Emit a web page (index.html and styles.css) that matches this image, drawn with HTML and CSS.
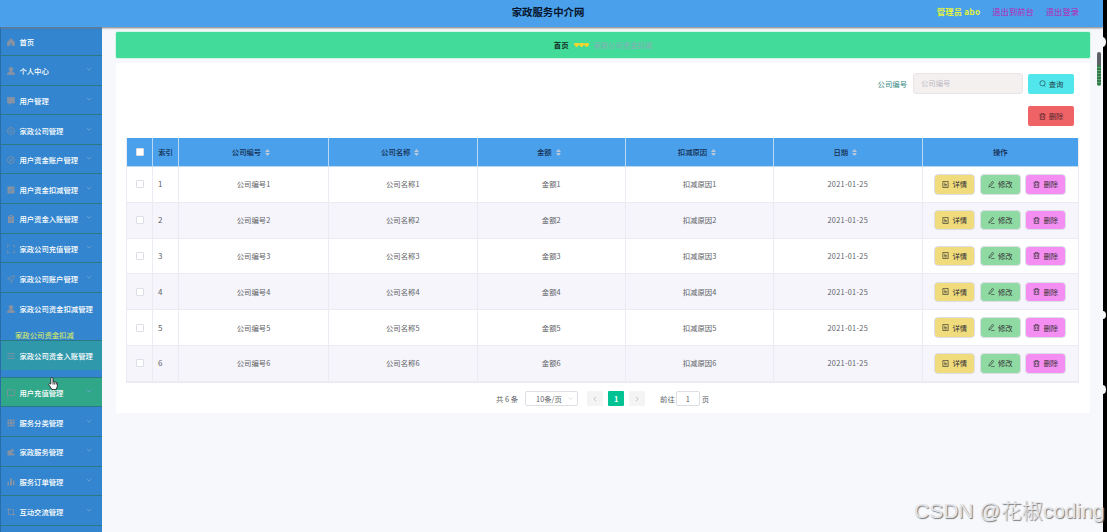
FILE: index.html
```html
<!DOCTYPE html>
<html lang="zh-CN">
<head>
<meta charset="utf-8">
<title>家政服务中介网</title>
<link rel="stylesheet" href="styles.css">
</head>
<body>
<svg class="defs" width="0" height="0">
  <symbol id="home" viewBox="0 0 16 16"><path fill="currentColor" d="M8 1 1 8v7h5v-5h4v5h5V8z"/></symbol>
  <symbol id="user" viewBox="0 0 16 16"><circle cx="8" cy="4.5" r="4" fill="currentColor"/><path fill="currentColor" d="M6 8h4v2l5 2v3H1v-3l5-2z"/></symbol>
  <symbol id="chat" viewBox="0 0 16 16"><path fill="currentColor" d="M1 1h14v11H8l-3 3v-3H1z"/></symbol>
  <symbol id="gauge" viewBox="0 0 16 16"><circle cx="8" cy="8" r="7"/><path d="M8 12V5M4 10V8M12 10V8M5 4l1 1M11 4l-1 1"/></symbol>
  <symbol id="compass" viewBox="0 0 16 16"><circle cx="8" cy="8" r="7"/><path d="m11 5-2 4-3 2 2-4z"/></symbol>
  <symbol id="check" viewBox="0 0 16 16"><path fill="currentColor" stroke="none" d="M1 1h14v14H1z"/><path class="tick" d="m4 8 3 3 5-6"/></symbol>
  <symbol id="clip" viewBox="0 0 16 16"><path fill="currentColor" stroke="none" d="M2 2h3V0h6v2h3v14H2z"/><path class="tick" d="m5 9 2 2 4-5M5 3h6"/></symbol>
  <symbol id="full" viewBox="0 0 16 16"><path d="M1 5V1h4M11 1h4v4M15 11v4h-4M5 15H1v-4"/></symbol>
  <symbol id="send" viewBox="0 0 16 16"><path d="M1 7 15 1 9 15 7 9z"/></symbol>
  <symbol id="menu" viewBox="0 0 16 16"><path d="M1 3h14M1 8h14M1 13h14"/></symbol>
  <symbol id="bubble" viewBox="0 0 16 16"><path d="M1 2h14v11H5l-4 2z"/></symbol>
  <symbol id="grid" viewBox="0 0 16 16"><path fill="currentColor" stroke="none" d="M1 1h4v4H1zM6 1h4v4H6zM11 1h4v4h-4zM1 6h4v4H1zM6 6h4v4H6zM11 6h4v4h-4zM1 11h4v4H1zM6 11h4v4H6zM11 11h4v4h-4z"/></symbol>
  <symbol id="wallet" viewBox="0 0 16 16"><path fill="currentColor" stroke="none" d="M1 5h6l4-4 3 4v2h-4v4h5v4H1z"/></symbol>
  <symbol id="bars" viewBox="0 0 16 16"><path fill="currentColor" stroke="none" d="M1 8h3v7H1zM6 1h4v14H6zM12 5h3v10h-3z"/></symbol>
  <symbol id="crop" viewBox="0 0 16 16"><path d="M3 0v13h13M0 3h13v13"/></symbol>
  <symbol id="down" viewBox="0 0 16 16"><path d="m2 5 6 6 6-6"/></symbol>
  <symbol id="search" viewBox="0 0 16 16"><circle cx="8" cy="7.5" r="6"/><path d="m12 12 2 3"/></symbol>
  <symbol id="trash" viewBox="0 0 16 16"><path d="M1 4h14M5 4V1h6v3M3 4v11h10V4M6 7v5M10 7v5"/></symbol>
  <symbol id="doc" viewBox="0 0 16 16"><path d="M2 1h12v14H2zM5 5h3M5 8h6M5 11h6"/></symbol>
  <symbol id="edit" viewBox="0 0 16 16"><path d="m3 10 7-9 3 2-7 9-4 2zM7 15h8"/></symbol>
  <symbol id="sort" viewBox="0 0 10 14"><path fill="currentColor" stroke="none" d="m5 0 5 6H0zM5 14 0 8h10z"/></symbol>
  <symbol id="heart" viewBox="0 0 12 10"><path fill="currentColor" stroke="none" d="M6 10 0 4V2l2-2h8l2 2v2z"/></symbol>
</svg>

<div class="screen">
  <header class="topbar">
    <h1 class="site-title">家政服务中介网</h1>
    <nav class="account"><b class="who">管理员 abo</b><a>退出到前台</a><a>退出登录</a></nav>
  </header>
  <div class="body">
    <aside class="sidebar">
      <div class="item first"><svg><use href="#home"/></svg><span>首页</span></div>
      <div class="item"><svg><use href="#user"/></svg><span>个人中心</span><svg class="arrow"><use href="#down"/></svg></div>
      <div class="item"><svg><use href="#chat"/></svg><span>用户管理</span><svg class="arrow"><use href="#down"/></svg></div>
      <div class="item"><svg><use href="#gauge"/></svg><span>家政公司管理</span><svg class="arrow"><use href="#down"/></svg></div>
      <div class="item"><svg><use href="#compass"/></svg><span>用户资金账户管理</span><svg class="arrow"><use href="#down"/></svg></div>
      <div class="item"><svg><use href="#check"/></svg><span>用户资金扣减管理</span><svg class="arrow"><use href="#down"/></svg></div>
      <div class="item"><svg><use href="#clip"/></svg><span>用户资金入账管理</span><svg class="arrow"><use href="#down"/></svg></div>
      <div class="item"><svg><use href="#full"/></svg><span>家政公司充值管理</span><svg class="arrow"><use href="#down"/></svg></div>
      <div class="item"><svg><use href="#send"/></svg><span>家政公司账户管理</span><svg class="arrow"><use href="#down"/></svg></div>
      <div class="group">
        <div class="item open"><svg><use href="#user"/></svg><span>家政公司资金扣减管理</span></div>
        <div class="subitem">家政公司资金扣减</div>
      </div>
      <div class="item teal"><svg><use href="#menu"/></svg><span>家政公司资金入账管理</span></div>
      <div class="spacer"></div>
      <div class="item hover"><svg><use href="#bubble"/></svg><span>用户充值管理</span><svg class="arrow"><use href="#down"/></svg></div>
      <div class="item"><svg><use href="#grid"/></svg><span>服务分类管理</span><svg class="arrow"><use href="#down"/></svg></div>
      <div class="item"><svg><use href="#wallet"/></svg><span>家政服务管理</span><svg class="arrow"><use href="#down"/></svg></div>
      <div class="item"><svg><use href="#bars"/></svg><span>服务订单管理</span><svg class="arrow"><use href="#down"/></svg></div>
      <div class="item"><svg><use href="#crop"/></svg><span>互动交流管理</span><svg class="arrow"><use href="#down"/></svg></div>
    </aside>
    <main class="main">
      <div class="crumbs"><b>首页</b><span class="hearts"><svg><use href="#heart"/></svg><svg><use href="#heart"/></svg><svg><use href="#heart"/></svg></span><span class="here">家政公司资金扣减</span></div>
      <section class="card">
        <div class="search"><label>公司编号</label><div class="input">公司编号</div><button class="btn query"><svg><use href="#search"/></svg>查询</button></div>
        <div class="actions"><button class="btn remove"><svg><use href="#trash"/></svg>删除</button></div>
        <div class="table">
          <div class="row head"><div><i class="box"></i></div><div>索引</div><div class="sortable">公司编号<svg><use href="#sort"/></svg></div><div class="sortable">公司名称<svg><use href="#sort"/></svg></div><div class="sortable">金额<svg><use href="#sort"/></svg></div><div class="sortable">扣减原因<svg><use href="#sort"/></svg></div><div class="sortable">日期<svg><use href="#sort"/></svg></div><div>操作</div></div>
          <div class="row"><div><i class="box"></i></div><div class="index">1</div><div>公司编号1</div><div>公司名称1</div><div>金额1</div><div>扣减原因1</div><div class="date">2021-01-25</div><div class="ops"><button class="op detail"><svg><use href="#doc"/></svg>详情</button><button class="op edit"><svg><use href="#edit"/></svg>修改</button><button class="op del"><svg><use href="#trash"/></svg>删除</button></div></div>
          <div class="row even"><div><i class="box"></i></div><div class="index">2</div><div>公司编号2</div><div>公司名称2</div><div>金额2</div><div>扣减原因2</div><div class="date">2021-01-25</div><div class="ops"><button class="op detail"><svg><use href="#doc"/></svg>详情</button><button class="op edit"><svg><use href="#edit"/></svg>修改</button><button class="op del"><svg><use href="#trash"/></svg>删除</button></div></div>
          <div class="row"><div><i class="box"></i></div><div class="index">3</div><div>公司编号3</div><div>公司名称3</div><div>金额3</div><div>扣减原因3</div><div class="date">2021-01-25</div><div class="ops"><button class="op detail"><svg><use href="#doc"/></svg>详情</button><button class="op edit"><svg><use href="#edit"/></svg>修改</button><button class="op del"><svg><use href="#trash"/></svg>删除</button></div></div>
          <div class="row even"><div><i class="box"></i></div><div class="index">4</div><div>公司编号4</div><div>公司名称4</div><div>金额4</div><div>扣减原因4</div><div class="date">2021-01-25</div><div class="ops"><button class="op detail"><svg><use href="#doc"/></svg>详情</button><button class="op edit"><svg><use href="#edit"/></svg>修改</button><button class="op del"><svg><use href="#trash"/></svg>删除</button></div></div>
          <div class="row"><div><i class="box"></i></div><div class="index">5</div><div>公司编号5</div><div>公司名称5</div><div>金额5</div><div>扣减原因5</div><div class="date">2021-01-25</div><div class="ops"><button class="op detail"><svg><use href="#doc"/></svg>详情</button><button class="op edit"><svg><use href="#edit"/></svg>修改</button><button class="op del"><svg><use href="#trash"/></svg>删除</button></div></div>
          <div class="row even"><div><i class="box"></i></div><div class="index">6</div><div>公司编号6</div><div>公司名称6</div><div>金额6</div><div>扣减原因6</div><div class="date">2021-01-25</div><div class="ops"><button class="op detail"><svg><use href="#doc"/></svg>详情</button><button class="op edit"><svg><use href="#edit"/></svg>修改</button><button class="op del"><svg><use href="#trash"/></svg>删除</button></div></div>
        </div>
        <div class="pager"><span>共 6 条</span><div class="size">10条/页<svg><use href="#down"/></svg></div><span class="pg prev"><svg><use href="#down"/></svg></span><span class="pg now">1</span><span class="pg next"><svg><use href="#down"/></svg></span><span class="goto">前往</span><div class="num">1</div><span>页</span></div>
      </section>
    </main>
  </div>
</div>
<i class="scroll"></i>
<div class="edge"><i class="notch n1"></i><i class="notch n2"></i><i class="notch n3"></i></div>
<svg class="cursor" viewBox="0 0 18 24"><path d="M5 13V3q0-2 2-2t2 2v6q4-1 8 2v6l-2 6H7l-6-9q0-3 4-1z" fill="#fff" stroke="#222" stroke-width="1.6"/><path d="M9 9v5M12 10v4M15 11v3" stroke="#222" fill="none"/></svg>
<div class="watermark">CSDN @花椒coding</div>
</body>
</html>
```
FILE: styles.css
```css
* { box-sizing: border-box; }
body { margin: 0; width: 1107px; height: 532px; overflow: hidden; position: relative; background: #f6f8fc; font: 7.35px/10px "Noto Sans CJK SC", sans-serif; color: #606266; }
svg { fill: none; stroke: currentColor; stroke-width: 1.5; flex: none; }
button { font: inherit; margin: 0; padding: 0; border: 0; }
.defs { position: absolute; }
.screen { width: 1103px; height: 532px; overflow: hidden; display: flex; flex-direction: column; }
.topbar { height: 27px; flex: none; background: #4aa0eb; display: grid; grid-template-columns: 1fr auto 1fr; align-items: center; padding: 0 24px 3px 17px; box-shadow: 0 1px 2px #777; z-index: 1; }
.site-title { grid-column: 2; margin: 0; font-size: 10.4px; line-height: 14px; font-weight: 700; color: #06152b; }
.account { display: flex; justify-content: flex-end; gap: 12px; padding-bottom: 2px; font-size: 8.3px; font-weight: 500; color: #a53ec0; }
.who { color: #e2f23c; letter-spacing: .2px; }
.body { flex: 1; display: flex; min-height: 0; }
.sidebar { width: 102px; flex: none; background: #3285ce; border-left: 1px solid #286ca9; color: #fff; overflow: hidden; font-weight: 500; }
.item { height: 29.62px; display: flex; align-items: center; padding: 2px 8px 0 6px; border-bottom: 1px solid #2b7a86; white-space: nowrap; }
.item.first { height: 29px; padding-top: 1px; }
.item svg { width: 8px; height: 8px; margin-right: 4.4px; color: #8792a3; }
.item .arrow { width: 6px; height: 6px; margin: -4px 2px 0 auto; color: #6fa3d2; stroke-width: 2.4; }
.tick { stroke: #3285ce; }
.group { height: 48px; border-bottom: 1px solid #2b7a86; }
.item.open { border: 0; }
.subitem { padding: 8px 0 0 14px; color: #e0f25a; font-weight: 400; }
.item.teal { background: #3098ab; border: 0; height: 29px; }
.spacer { height: 8px; border-bottom: 1px solid #2b7a86; }
.item.hover { background: #31a78a; }
.main { flex: 1; padding: 5px 13px 0 14px; }
.crumbs { height: 26px; background: #42db9a; border-radius: 1px; display: flex; justify-content: center; align-items: center; color: #122c24; outline: 1px solid #d3f5e6; }
.hearts { display: flex; margin: 0 4px 0 5px; color: #f4d52d; }
.hearts svg { width: 5.3px; height: 4.5px; }
.here { color: #8aadb8; }
.card { margin-top: 5px; height: 350px; background: #fff; padding: 10px 11px 0 10px; }
.search { display: flex; justify-content: flex-end; align-items: center; padding-right: 5px; height: 21px; color: #388a85; }
.input { width: 110px; height: 21px; margin: 0 5px 0 6px; border: 1px solid #e8e4e8; border-radius: 3px; background: #f5f0f0; color: #bcbcc5; padding: 4px 7px; }
.btn { width: 46px; height: 20px; border-radius: 2px; display: flex; align-items: center; justify-content: center; gap: 3px; color: #24464a; }
.btn svg { width: 7px; height: 7px; }
.query { background: #51e6ec; }
.remove { background: #ef6366; color: #54262c; }
.actions { display: flex; justify-content: flex-end; padding: 12px 5px 0 0; }
.table { margin-top: 12px; border: 1px solid #ebebf3; border-top: 0; width: 953px; }
.row { display: grid; grid-template-columns: 26px 26px 150px 148.5px 148.5px 148px 148.5px 1fr; height: 35.8px; background: #fff; }
.row > div { display: flex; align-items: center; justify-content: center; border-right: 1px solid #ebebf3; border-bottom: 1px solid #ebebf3; }
.row > div:last-child { border-right: 0; }
.row.even { background: #f5f5fb; }
.row.head { height: 29px; background: #4aa0eb; color: #152e50; font-weight: 500; }
.row.head > div { border-color: #b9d9f3; }
.row.head > .sortable { padding-right: 5px; }
.head svg { width: 5px; height: 7px; margin-left: 4px; color: #b9c8da; }
.box { width: 8px; height: 8px; border: 1px solid #dcdfe6; border-radius: 1px; background: #fff; }
.row > .index { justify-content: flex-start; padding-left: 5px; font-size: 8px; }
.date { letter-spacing: .3px; }
.row > .ops { gap: 4.5px; }
.op { width: 41px; height: 20.5px; border: 1px solid #dcdfe6; border-radius: 4px; display: flex; align-items: center; justify-content: center; gap: 3px; color: #333; }
.op svg { width: 7px; height: 7px; }
.detail { background: #f0dc7d; }
.edit { background: #8fdaa3; }
.del { background: #f58ef2; }
.pager { display: flex; align-items: center; padding: 5px 0 0 370px; height: 27px; }
.size { width: 53px; height: 15px; border: 1px solid #dcdfe6; border-radius: 2px; margin: 0 9px 0 7px; display: flex; align-items: center; justify-content: space-between; padding: 0 4px 0 10px; }
.size svg { width: 5px; height: 5px; color: #b5b8c0; }
.pg { width: 16px; height: 15px; background: #f4f4f5; border-radius: 1px; margin-right: 5px; display: flex; align-items: center; justify-content: center; }
.pg svg { width: 6px; height: 6px; color: #a0a3aa; }
.prev svg { transform: rotate(90deg); }
.next svg { transform: rotate(-90deg); }
.now { background: #00c292; color: #fff; font-weight: 700; }
.goto { margin-left: 10px; }
.num { width: 24px; height: 15px; border: 1px solid #dcdfe6; border-radius: 2px; margin: 0 2px 0 1px; text-align: center; line-height: 13px; }
.scroll { position: absolute; left: 1097px; top: 52px; width: 4px; height: 34px; border-radius: 2px; background: repeating-linear-gradient(#39784d 0 2px, #55a76d 2px 3px) 0 13px no-repeat, #5e6166; }
.edge { position: absolute; left: 1103px; top: 0; width: 4px; height: 532px; background: #000; overflow: hidden; }
.notch { position: absolute; left: -4px; width: 7px; height: 8px; border-radius: 50%; background: #f6f8fc; }
.n1 { top: 37px; height: 10px; }
.n2 { top: 311px; }
.n3 { top: 385px; height: 9px; }
.cursor { position: absolute; left: 48px; top: 377px; width: 10px; height: 13px; }
.watermark { position: absolute; left: 914px; top: 497px; font-family: "Liberation Sans", "Noto Sans CJK SC", sans-serif; font-size: 21px; line-height: 28px; font-weight: 300; white-space: nowrap; color: #e4e5e8; text-shadow: 1px 1px 1px #777; }
```
